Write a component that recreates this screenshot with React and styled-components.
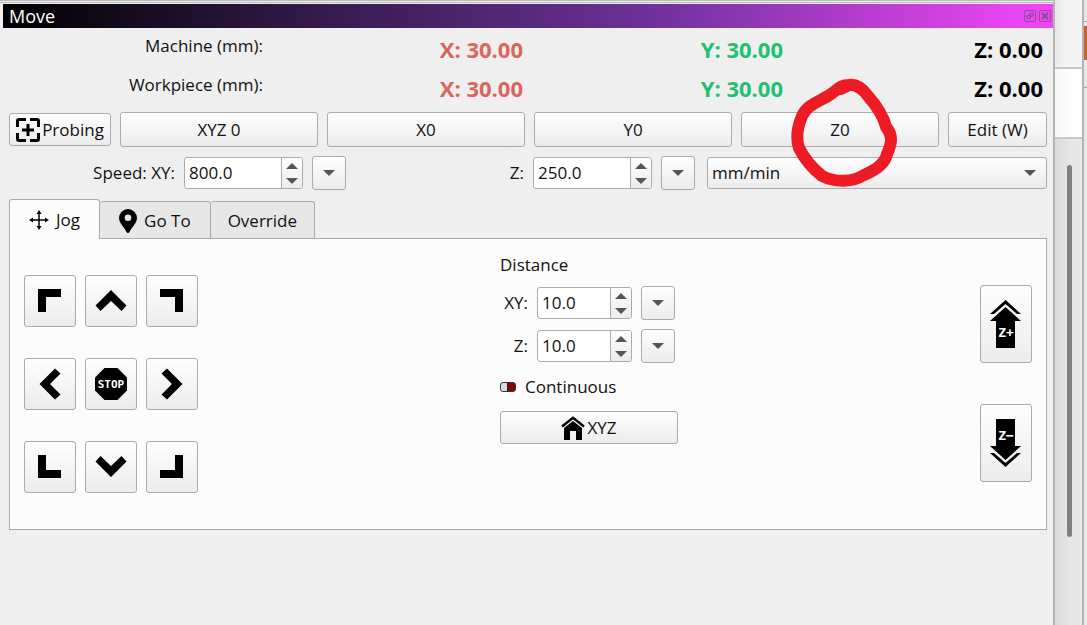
import React, { useState } from 'react';
import styled, { createGlobalStyle } from 'styled-components';

const GlobalStyle = createGlobalStyle`
    * {
        box-sizing: border-box;
    }

    body {
        margin: 0;
        background: #efefef;
        color: #111;
        font-family: "Open Sans", "Noto Sans", sans-serif;
        font-size: 17px;
        line-height: 24px;
    }

    button, input, select {
        font: inherit;
        color: inherit;
        margin: 0;
    }
`

const machine = [
    {
        name: "Machine (mm):",
        x: "X: 30.00",
        y: "Y: 30.00",
        z: "Z: 0.00"
    },
    {
        name: "Workpiece (mm):",
        x: "X: 30.00",
        y: "Y: 30.00",
        z: "Z: 0.00"
    },
]

const zeroButtons = ["XYZ 0", "X0", "Y0", "Z0"]

const jogButtons = [
    { name: "Jog X- Y+", path: "M8 8h23v8h-15v15h-8z" },
    { name: "Jog Y+", path: "M20 9 35.500 24.500l-5 5.500L20 20 9.500 30l-5-5.500z" },
    { name: "Jog X+ Y+", path: "M8 8h23v23h-8v-15h-15z" },
    { name: "Jog X-", path: "M9.500 20 25 4.500l5.500 5L20 20l10.500 10.500-5.500 5z" },
    { name: "Stop", stop: true },
    { name: "Jog X+", path: "M30.500 20 15 4.500l-5.500 5L20 20 9.500 30.500l5.500 5z" },
    { name: "Jog X- Y-", path: "M8 8h8v15h15v8h-23z" },
    { name: "Jog Y-", path: "M20 30 35.500 14.500l-5-5.500L20 19 9.500 9l-5 5.500z" },
    { name: "Jog X+ Y-", path: "M23 8h8v23h-23v-8h15z" },
]

function Triangle({ up }) {
    return (
        <svg width="12" height="6" viewBox="0 0 12 6" aria-hidden="true">
            <path d={up ? "M0 6 6 0l6 6z" : "M0 0h12L6 6z"} fill="#555" />
        </svg>
    )
}

function SpinBox({ id, start, width }) {
    const [value, setValue] = useState(start)
    const step = (amount) => {
        setValue((parseFloat(value) + amount).toFixed(1))
    }
    return (
        <Spin $width={width}>
            <SpinInput id={id} value={value} onChange={(e) => setValue(e.target.value)} />
            <SpinSteps>
                <StepButton aria-label="Increase" onClick={() => step(1)}><Triangle up /></StepButton>
                <StepButton aria-label="Decrease" onClick={() => step(-1)}><Triangle /></StepButton>
            </SpinSteps>
        </Spin>
    )
}

function Presets({ label }) {
    return (
        <PresetButton aria-label={label}>
            <Triangle />
        </PresetButton>
    )
}

function ProbeIcon() {
    return (
        <svg width="24" height="24" viewBox="0 0 24 24" fill="none" stroke="#000" strokeWidth="3" aria-hidden="true">
            <path d="M1.500 9V3q0-1.500 1.500-1.500H10M14 1.500h7q1.500 0 1.500 1.500V9M22.500 15v6q0 1.500-1.500 1.500H14M10 22.500H3q-1.500 0-1.500-1.500V15M12 6v12M6 12h12" />
        </svg>
    )
}

function MoveIcon() {
    return (
        <svg width="20" height="20" viewBox="0 0 20 20" aria-hidden="true">
            <path d="M10 2v16M2 10h16" stroke="#000" strokeWidth="1.500" />
            <path d="M10 0l2.500 4h-5zM10 20l2.500-4h-5zM0 10l4-2.500v5zM20 10l-4-2.500v5z" />
        </svg>
    )
}

function PinIcon() {
    return (
        <svg width="18" height="24" viewBox="0 0 18 24" aria-hidden="true">
            <path fillRule="evenodd" d="M9 0a9 9 0 0 1 9 9c0 5-5.500 9.500-7.500 14q-1.500 2-3 0C5.500 18.500 0 14 0 9a9 9 0 0 1 9-9zm0 5.500a3.300 3.300 0 1 0 0 6.600 3.300 3.300 0 0 0 0-6.600z" />
        </svg>
    )
}

function HomeIcon() {
    return (
        <svg width="24" height="24" viewBox="0 0 24 24" aria-hidden="true">
            <path d="M1 10.500 12 1.700l11 8.800" fill="none" stroke="#000" strokeWidth="2.400" />
            <path d="M3 12 12 5l9 7V24h-6v-9H9V24H3z" />
        </svg>
    )
}

function StopIcon() {
    return (
        <svg width="32" height="32" viewBox="0 0 32 32" aria-hidden="true">
            <path d="M9.500 0h13L32 9.500v13L22.500 32h-13L0 22.500v-13z" />
            <StopText x="16" y="20" textAnchor="middle">STOP</StopText>
        </svg>
    )
}

function ZArrow({ down }) {
    return (
        <svg width="32" height="48" viewBox="0 0 32 48" aria-hidden="true">
            {down
                ? <path d="M6 0h19v27h6L15.500 41 0 27h6zM0 34h4l11.500 10L27 34h4L15.500 48z" />
                : <path d="M6 48h19V21h6L15.500 7 0 21h6zM0 14h4L15.500 4 27 14h4L15.500 0z" />}
            <ZText x="16" y={down ? 21 : 37} textAnchor="middle">{down ? "Z−" : "Z+"}</ZText>
        </svg>
    )
}

function TitleIcon({ close }) {
    return (
        <svg width="12" height="12" viewBox="0 0 12 12" fill="none" stroke="#7d4a8c" aria-hidden="true">
            <rect x="0.500" y="0.500" width="11" height="11" rx="1.500" opacity="0.8" />
            {close
                ? <path d="M3 3l6 6M9 3L3 9" strokeWidth="2" />
                : <path d="M5.500 3.500l3-1 1 3-3 1zM2.500 6l3-1 1 3-3 1z" />}
        </svg>
    )
}

function App() {
    const [tab, setTab] = useState("Jog")
    const [continuous, setContinuous] = useState(false)
    const tabs = [
        { name: "Jog", icon: <MoveIcon /> },
        { name: "Go To", icon: <PinIcon /> },
        { name: "Override" },
    ]

    return (
        <>
            <GlobalStyle />
            <Page>
                <Dock>
                    <TitleBar>
                        <Title>Move</Title>
                        <TitleButton aria-label="Float"><TitleIcon /></TitleButton>
                        <TitleButton aria-label="Close"><TitleIcon close /></TitleButton>
                    </TitleBar>

                    <Readouts>
                        {machine.map((row) => (
                            <React.Fragment key={row.name}>
                                <ReadoutLabel>{row.name}</ReadoutLabel>
                                <Readout $color="#d9655b">{row.x}</Readout>
                                <Readout $color="#1fc070">{row.y}</Readout>
                                <Readout $color="#000">{row.z}</Readout>
                            </React.Fragment>
                        ))}
                    </Readouts>

                    <Controls>
                        <ZeroRow>
                            <ProbeButton><ProbeIcon />Probing</ProbeButton>
                            {zeroButtons.map((name) => (
                                <Button key={name}>
                                    {name}
                                    {name === "Z0" &&
                                        <Marker viewBox="0 0 108 112" aria-hidden="true">
                                            <path d="M58 8C48 8 46 14 37 19C27 25 16 28 11 39C6 51 5 62 8 71C14 83 21 91 31 99C45 106 62 105 73 98C85 93 94 87 96 77C101 66 102 58 95 50C92 37 84 27 77 19C72 12 66 7 58 8L50 12" />
                                        </Marker>
                                    }
                                </Button>
                            ))}
                            <Button>Edit (W)</Button>
                        </ZeroRow>

                        <SpeedRow>
                            <Field>
                                <label htmlFor="speed-xy">Speed: XY:</label>
                                <SpinBox id="speed-xy" start="800.0" width={119} />
                                <Presets label="XY speed presets" />
                            </Field>
                            <Field>
                                <label htmlFor="speed-z">Z:</label>
                                <SpinBox id="speed-z" start="250.0" width={119} />
                                <Presets label="Z speed presets" />
                            </Field>
                            <UnitBox>
                                <UnitSelect aria-label="Speed unit">
                                    <option>mm/min</option>
                                    <option>mm/s</option>
                                </UnitSelect>
                                <UnitArrow><Triangle /></UnitArrow>
                            </UnitBox>
                        </SpeedRow>

                        <Tabs role="tablist">
                            {tabs.map((item) => (
                                <Tab
                                    key={item.name}
                                    role="tab"
                                    aria-selected={tab === item.name}
                                    $active={tab === item.name}
                                    $side={item.icon ? 19 : 17}
                                    onClick={() => setTab(item.name)}>
                                    {item.icon}
                                    {item.name}
                                </Tab>
                            ))}
                        </Tabs>

                        <Panel role="tabpanel">
                            <JogGrid>
                                {jogButtons.map((item) => (
                                    <SquareButton key={item.name} aria-label={item.name}>
                                        {item.stop
                                            ? <StopIcon />
                                            : <svg width="40" height="40" viewBox="0 0 40 40" aria-hidden="true"><path d={item.path} /></svg>}
                                    </SquareButton>
                                ))}
                            </JogGrid>

                            <Distance>
                                <span>Distance</span>
                                <Field>
                                    <label htmlFor="distance-xy">XY:</label>
                                    <SpinBox id="distance-xy" start="10.0" width={95} />
                                    <Presets label="XY distance presets" />
                                </Field>
                                <Field>
                                    <label htmlFor="distance-z">Z:</label>
                                    <SpinBox id="distance-z" start="10.0" width={95} />
                                    <Presets label="Z distance presets" />
                                </Field>
                                <Continuous>
                                    <Toggle
                                        type="checkbox"
                                        checked={continuous}
                                        onChange={() => setContinuous(!continuous)}
                                    />
                                    Continuous
                                </Continuous>
                                <HomeButton><HomeIcon />XYZ</HomeButton>
                            </Distance>

                            <ZColumn>
                                <TallButton aria-label="Jog Z+"><ZArrow /></TallButton>
                                <TallButton aria-label="Jog Z-"><ZArrow down /></TallButton>
                            </ZColumn>
                        </Panel>
                    </Controls>
                </Dock>

                <SideStrip>
                    <SideHeader />
                    <SideBox />
                    <ScrollTrack><ScrollThumb /></ScrollTrack>
                </SideStrip>
                <EdgeStrip>
                    <EdgeTop />
                    <EdgeAccent />
                    <EdgeGap />
                </EdgeStrip>
            </Page>
        </>
    )
}
export default App

const Page = styled.div`
    display: flex;
    min-height: 100vh;
`

const Dock = styled.main`
    flex: 1;
    min-width: 0;
    padding: 1px 0 0 3px;
    border-top: 3px double #bbb;
    border-right: 2px solid #b4b4b4;
`

const TitleBar = styled.header`
    display: flex;
    align-items: center;
    gap: 3px;
    height: 24px;
    padding: 0 2px 0 6px;
    color: #fff;
    background: linear-gradient(90deg, #000 0%, #3c1d55 34%, #6b3199 61%, #ee46f5 98%);
`

const Title = styled.span`
    flex: 1;
    font-size: 18px;
`

const TitleButton = styled.button`
    display: flex;
    padding: 0;
    border: 0;
    background: none;
`

const Readouts = styled.section`
    display: grid;
    grid-template-columns: repeat(4, 1fr);
    grid-auto-rows: 39px;
    padding-right: 10px;
    text-align: right;
`

const ReadoutLabel = styled.span`
    padding-top: 6px;
`

const Readout = styled.strong`
    padding-top: 6px;
    font-size: 22px;
    line-height: 30px;
    font-weight: 700;
    color: ${({ $color }) => $color};
`

const Controls = styled.section`
    padding: 6px 6px 0;
`

const Button = styled.button`
    position: relative;
    display: flex;
    align-items: center;
    justify-content: center;
    height: 35px;
    padding: 0;
    border: 1px solid #ababab;
    border-radius: 3px;
    background: linear-gradient(#fefefe, #ececec);
    white-space: nowrap;
`

const ZeroRow = styled.div`
    display: grid;
    grid-template-columns: 102px repeat(4, 1fr) 99px;
    align-items: center;
    gap: 9px;
`

const ProbeButton = styled(Button)`
    height: 33px;
    gap: 2px;
`

/* hand-drawn ring laid over the Z0 button */
const Marker = styled.svg`
    position: absolute;
    z-index: 1;
    top: -36px;
    left: 49px;
    width: 108px;
    height: 112px;
    fill: none;
    stroke: #ed1c24;
    stroke-width: 12px;
    stroke-linecap: round;
    stroke-linejoin: round;
    pointer-events: none;
`

const SpeedRow = styled.div`
    display: grid;
    grid-template-columns: 337fr 337fr 340fr;
    align-items: center;
    gap: 12px;
    margin-top: 9px;
`

const Field = styled.div`
    display: flex;
    align-items: center;
    justify-content: flex-end;
    gap: 9px;
`

const Spin = styled.div`
    display: flex;
    width: ${({ $width }) => $width}px;
    height: 32px;
    border: 1px solid #ababab;
    border-radius: 3px;
    background: #fff;
    overflow: hidden;
`

const SpinInput = styled.input`
    flex: 1;
    min-width: 0;
    padding: 0 0 0 4px;
    border: 0;
    outline: 0;
    background: none;
`

const SpinSteps = styled.div`
    display: flex;
    flex-direction: column;
    width: 21px;
    border-left: 1px solid #ababab;
    background: linear-gradient(#fefefe, #ececec);
`

const StepButton = styled.button`
    display: flex;
    flex: 1;
    align-items: center;
    justify-content: center;
    padding: 2px 0;
    border: 0;
    background: none;
`

const PresetButton = styled(Button)`
    width: 34px;
    height: 34px;
`

const UnitBox = styled.div`
    display: grid;
    align-items: center;
`

const UnitSelect = styled.select`
    grid-area: 1 / 1;
    width: 100%;
    height: 32px;
    padding: 0 4px;
    appearance: none;
    border: 1px solid #ababab;
    border-radius: 3px;
    background: linear-gradient(#fefefe, #ececec);
`

const UnitArrow = styled.span`
    display: flex;
    grid-area: 1 / 1;
    justify-self: end;
    padding-right: 11px;
    pointer-events: none;
`

const Tabs = styled.div`
    display: flex;
    align-items: flex-end;
    margin-top: 9px;
`

const Tab = styled.button`
    display: flex;
    align-items: center;
    gap: 7px;
    height: ${({ $active }) => $active ? 40 : 37}px;
    margin-bottom: ${({ $active }) => $active ? -1 : 0}px;
    padding: ${({ $active }) => $active ? 0 : 2}px ${({ $side }) => $side}px 0;
    border: 1px solid #ababab;
    border-width: ${({ $active }) => $active ? "1px 1px 0 1px" : "1px 1px 0 0"};
    border-radius: 3px 3px 0 0;
    background: ${({ $active }) => $active ? "#fcfcfc" : "#e7e7e7"};
    z-index: ${({ $active }) => $active ? 1 : 0};
`

const Panel = styled.div`
    display: flex;
    align-items: center;
    justify-content: space-between;
    padding: 14px 14px 36px;
    border: 1px solid #ababab;
    background: #fcfcfc;
`

const JogGrid = styled.div`
    display: grid;
    grid-template-columns: repeat(3, 52px);
    gap: 31px 9px;
    padding-top: 22px;
`

const SquareButton = styled(Button)`
    width: 52px;
    height: 52px;
`

const StopText = styled.text`
    fill: #fff;
    font: 700 11px "DejaVu Sans Mono", monospace;
`

const ZText = styled.text`
    fill: #fff;
    font: 700 13px "DejaVu Sans Mono", monospace;
`

const Distance = styled.div`
    display: flex;
    flex-direction: column;
    align-self: flex-start;
    gap: 9px;
    width: 178px;

    ${Field} {
        padding-right: 3px;
    }
`

const Continuous = styled.label`
    display: flex;
    align-items: center;
    gap: 9px;
    height: 30px;
`

const Toggle = styled.input`
    appearance: none;
    width: 16px;
    height: 10px;
    margin: 0;
    border: 1px solid #333;
    border-radius: 3px;
    background: linear-gradient(90deg, #ddd 0 45%, #222 45% 50%, #850808 50%);

    &:checked {
        background: linear-gradient(90deg, #0a7a20 0 50%, #222 50% 55%, #ddd 55%);
    }
`

const HomeButton = styled(Button)`
    height: 33px;
    gap: 2px;
`

const ZColumn = styled.div`
    display: flex;
    flex-direction: column;
    gap: 41px;
    padding-top: 21px;
`

const TallButton = styled(Button)`
    width: 52px;
    height: 78px;
`

const SideStrip = styled.aside`
    display: flex;
    flex-direction: column;
    width: 27px;
    background: #e6e6e6;
`

const SideHeader = styled.div`
    height: 69px;
    background: linear-gradient(90deg, #e8e8e8, #f4f4f4 40%);
    border-bottom: 2px solid #c8c8c8;
`

const SideBox = styled.div`
    height: 70px;
    background: linear-gradient(90deg, #f6f6f6, #fefefe 60%);
    border-bottom: 2px solid #c8c8c8;
`

const ScrollTrack = styled.div`
    flex: 1;
    padding: 26px 0 0 12px;
    background: linear-gradient(90deg, #d8d8d8, #e8e8e8 60%);
`

const ScrollThumb = styled.div`
    width: 5px;
    height: 372px;
    border-radius: 3px;
    background: #808080;
`

const EdgeStrip = styled.aside`
    width: 5px;
    border-left: 2px solid #b4b4b4;
    background: #e8e8e8;
`

const EdgeTop = styled.div`
    height: 22px;
    border-bottom: 1px solid #aaa;
`

const EdgeAccent = styled.div`
    height: 34px;
    margin-top: 4px;
    background: #c8622f;
`

const EdgeGap = styled.div`
    height: 28px;
    border-bottom: 1px solid #aaa;
`
